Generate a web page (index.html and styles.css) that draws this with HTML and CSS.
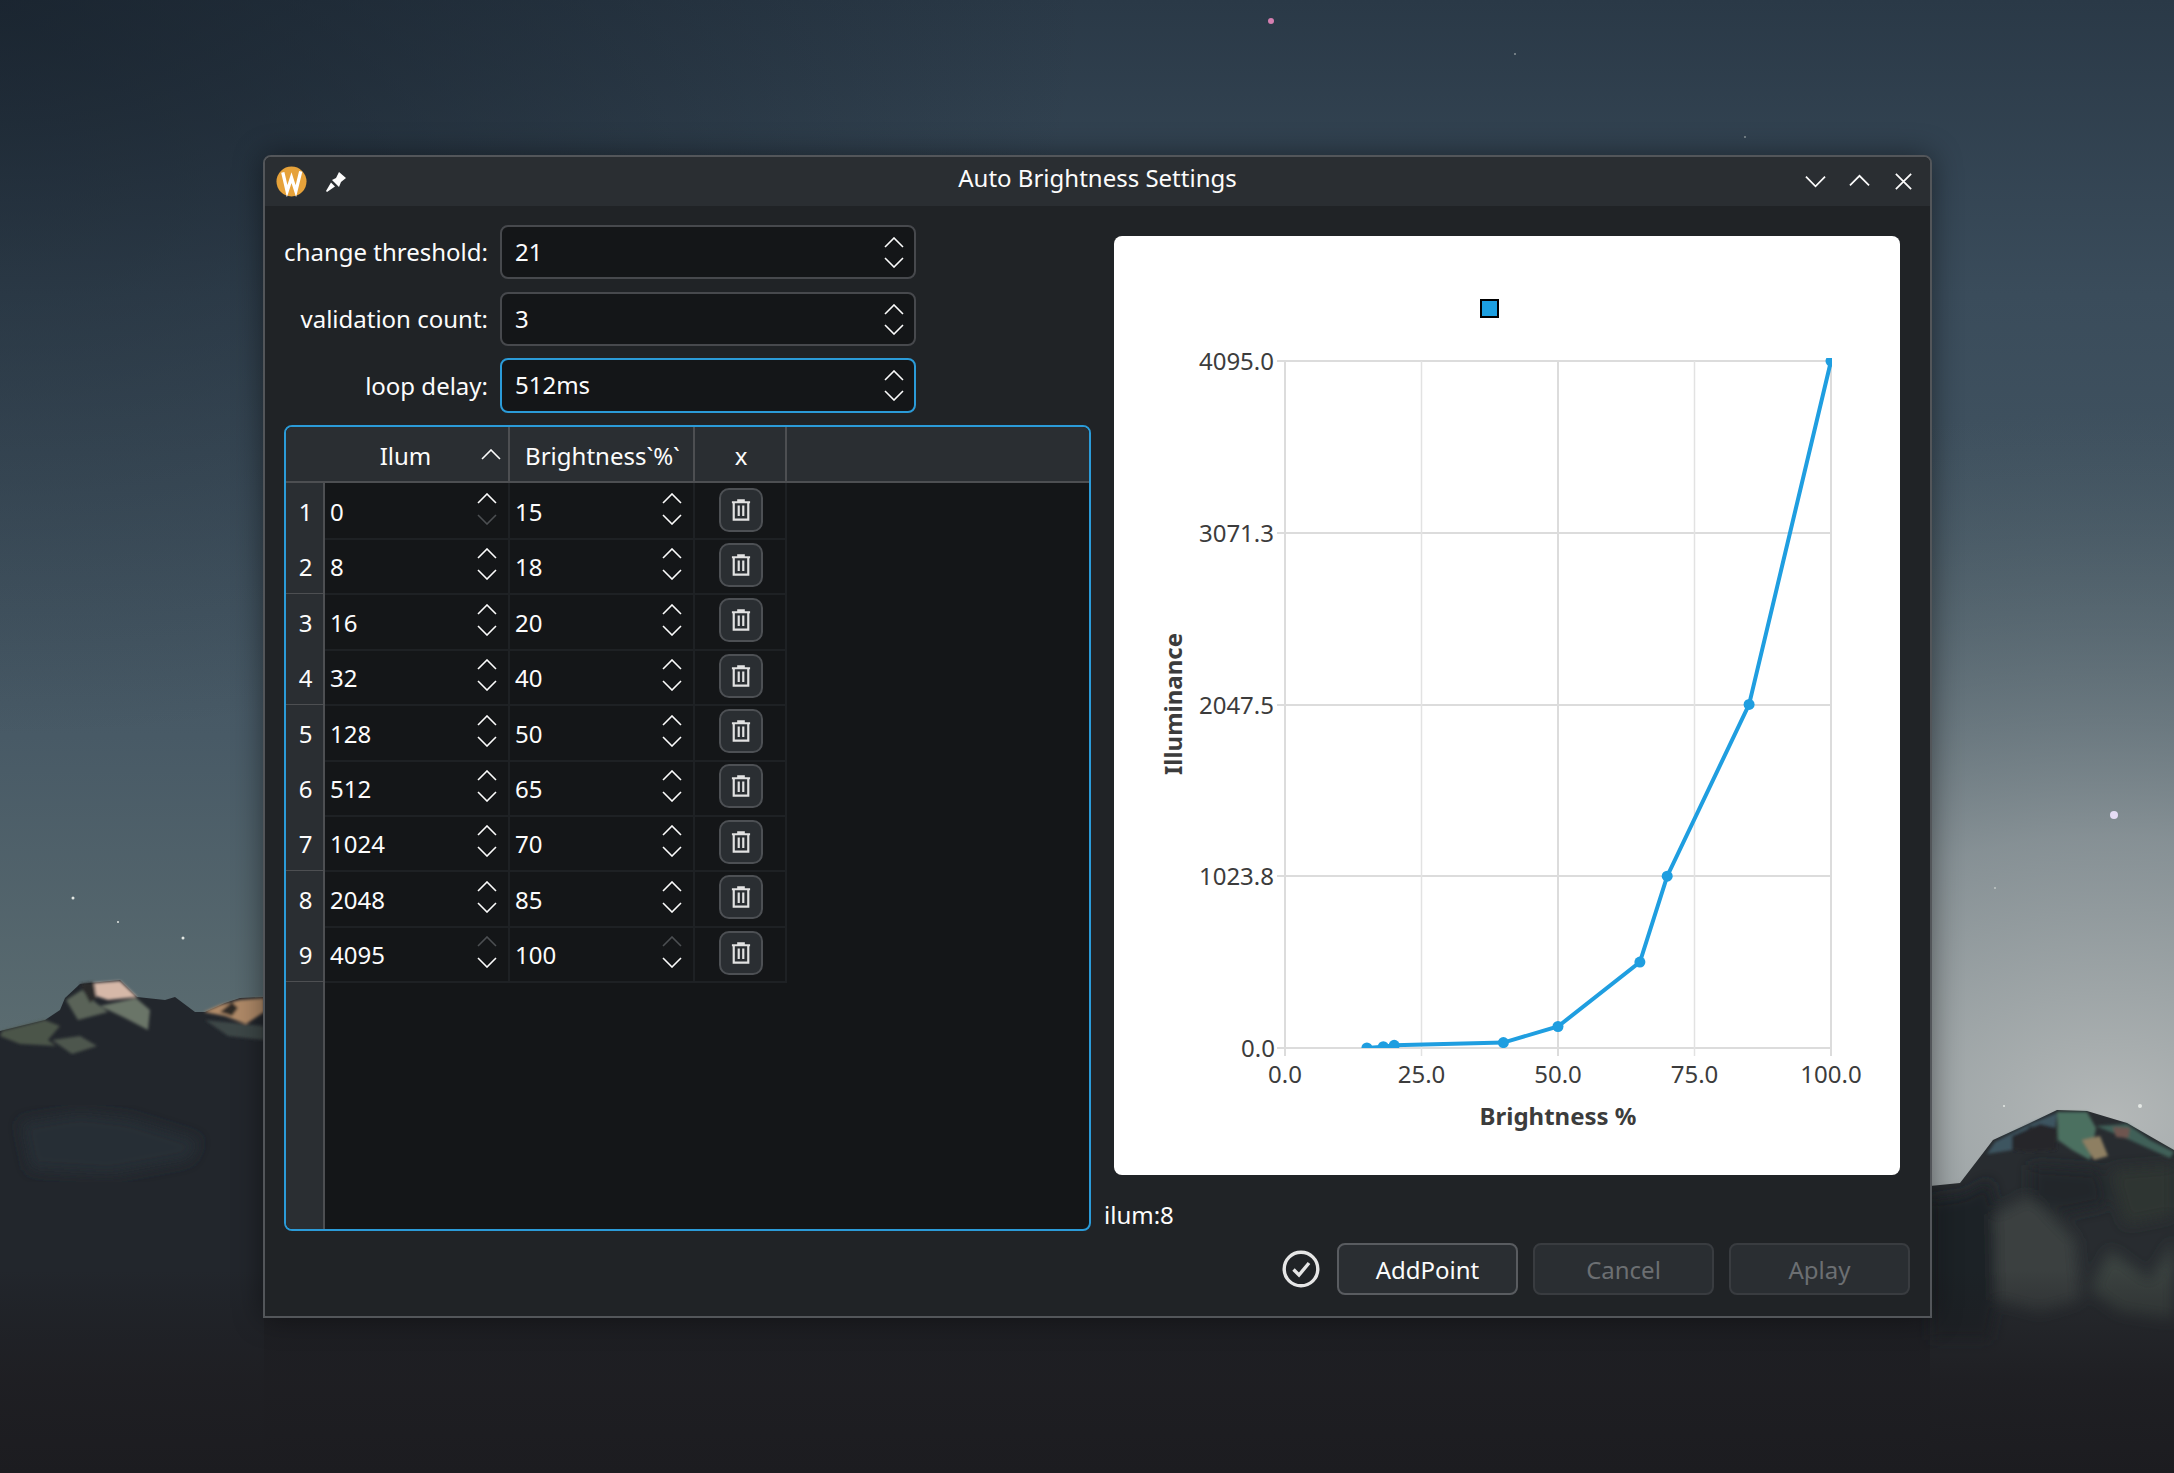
FILE: index.html
```html
<!DOCTYPE html>
<html lang="en">
<head>
  <meta charset="UTF-8" />
  <title>Auto Brightness Settings</title>
  <link rel="stylesheet" href="styles.css">
</head>
<body>

<!-- wallpaper -->
<svg class="wallpaper" viewBox="0 0 2174 1473" preserveAspectRatio="none">
  <defs>
    <linearGradient id="sky" x1="0" y1="0" x2="0" y2="1">
      <stop offset="0" stop-color="#2a3947"/>
      <stop offset="0.2" stop-color="#3a4c5b"/>
      <stop offset="0.5" stop-color="#485a66"/>
      <stop offset="0.72" stop-color="#5c6d71"/>
      <stop offset="1" stop-color="#5c6d71"/>
    </linearGradient>
    <radialGradient id="glow" cx="0.97" cy="0.76" r="0.48">
      <stop offset="0" stop-color="#b4b8b8" stop-opacity="1"/>
      <stop offset="0.4" stop-color="#98a0a3" stop-opacity="0.75"/>
      <stop offset="1" stop-color="#5c6d71" stop-opacity="0"/>
    </radialGradient>
    <radialGradient id="corner" cx="0" cy="0" r="0.5">
      <stop offset="0" stop-color="#141d27" stop-opacity="0.7"/>
      <stop offset="1" stop-color="#141d27" stop-opacity="0"/>
    </radialGradient>
    <linearGradient id="ground" x1="0" y1="0" x2="0" y2="1">
      <stop offset="0" stop-color="#1c1c20" stop-opacity="0"/>
      <stop offset="0.55" stop-color="#1e1e22" stop-opacity="0.9"/>
      <stop offset="1" stop-color="#1c1c20"/>
    </linearGradient>
    <filter id="soft"><feGaussianBlur stdDeviation="1.500"/></filter>
    <filter id="softer"><feGaussianBlur stdDeviation="7"/></filter>
  </defs>
  <rect width="2174" height="1473" fill="url(#sky)"/>
  <rect width="2174" height="1473" fill="url(#glow)"/>
  <rect width="2174" height="1473" fill="url(#corner)"/>

  <g fill="#e4e8e4">
    <circle cx="1271" cy="21" r="3" fill="#d57fb0"/>
    <circle cx="2114" cy="815" r="4" fill="#e6dcf5"/>
    <circle cx="73" cy="898" r="1.500"/>
    <circle cx="118" cy="922" r="1"/>
    <circle cx="183" cy="938" r="1.500"/>
    <circle cx="2140" cy="1106" r="2"/>
    <circle cx="2004" cy="1106" r="1"/>
    <circle cx="1515" cy="54" r="1" opacity="0.5"/>
    <circle cx="1745" cy="137" r="1" opacity="0.5"/>
    <circle cx="1995" cy="888" r="1" opacity="0.6"/>
  </g>

  <!-- ground between the two mountains, behind the window -->
  <rect x="240" y="1040" width="1691" height="433" fill="#1e2025"/>

  <!-- left mountain -->
  <polygon fill="#22262c" points="0,1031 45,1020 60,1010 65,998 80,984 120,980 137,997 165,1000 175,997 195,1012 205,1012 225,1003 240,998 264,997 264,1473 0,1473"/>
  <g filter="url(#soft)">
    <polygon fill="#4b5449" points="2,1031 45,1020 60,1026 48,1040 56,1046 20,1044 0,1036"/>
    <polygon fill="#4e574d" points="52,1040 80,1036 97,1046 72,1054"/>
    <polygon fill="#5a6458" points="66,1000 82,990 95,1002 108,1012 78,1020"/>
    <polygon fill="#6a7468" points="100,1006 136,998 150,1010 148,1030 125,1018"/>
    <polygon fill="#d6b8a8" points="94,983 120,981 137,997 108,1000 96,996"/>
    <polygon fill="#2a2a2c" points="80,984 93,982 96,998 90,1003"/>
    <polygon fill="#b08a68" points="204,1012 220,1005 240,1000 264,998 264,1012 246,1024 225,1016"/>
    <polygon fill="#2e2a28" points="220,1012 232,1002 238,1008 232,1016"/>
    <polygon fill="#3c4646" points="205,1020 264,1026 264,1040 228,1036"/>
  </g>
  <polygon fill="#282d35" filter="url(#softer)" points="20,1122 80,1112 130,1118 200,1140 190,1160 110,1175 30,1170"/>

  <!-- right mountain -->
  <polygon fill="#282c30" points="1930,1186 1960,1183 1980,1157 1993,1140 2030,1123 2057,1110 2087,1111 2127,1123 2174,1150 2174,1473 1930,1473"/>
  <g filter="url(#softer)">
    <polygon fill="#1f2328" points="1930,1200 1965,1195 1990,1180 2005,1260 1990,1340 1930,1340"/>
    <polygon fill="#3a413f" points="1994,1215 2030,1195 2050,1215 2075,1240 2080,1300 2040,1312 1996,1300"/>
    <polygon fill="#3a423f" points="2090,1290 2110,1250 2150,1280 2174,1240 2174,1320 2120,1312"/>
    <polygon fill="#23262c" points="2030,1165 2100,1170 2108,1205 2060,1215 2030,1200"/>
    <polygon fill="#2f3433" points="2110,1170 2174,1165 2174,1215 2125,1225"/>
  </g>
  <g filter="url(#soft)">
    <polygon fill="#3d5560" points="1987,1154 1995,1142 2030,1124 2057,1113 2055,1130 2030,1126 2012,1150"/>
    <polygon fill="#25262c" points="2012,1136 2040,1124 2057,1128 2056,1150 2028,1152 2012,1150"/>
    <polygon fill="#4c6f60" points="2057,1112 2087,1112 2096,1128 2090,1160 2072,1150 2058,1140"/>
    <polygon fill="#3f6158" points="2096,1126 2127,1124 2150,1140 2174,1152 2170,1158 2130,1140"/>
    <polygon fill="#8e7f62" points="2082,1140 2100,1136 2108,1156 2094,1160"/>
    <polygon fill="#6e5550" points="2113,1127 2130,1128 2128,1138 2116,1137"/>
  </g>

  <rect y="1270" width="2174" height="203" fill="url(#ground)"/>
</svg>

<svg class="defs-only" width="0" height="0">
  <symbol id="up" viewBox="0 0 20 11"><path d="M1 10 10 1l9 9" fill="none" stroke="currentColor" stroke-width="1.600"/></symbol>
  <symbol id="down" viewBox="0 0 20 11"><path d="M1 1l9 9 9-9" fill="none" stroke="currentColor" stroke-width="1.600"/></symbol>
  <symbol id="trash" viewBox="0 0 22 24">
    <path d="M1 3.500h20M8 3.500V1.500h6v2M3 3.500v19h16v-19M8.500 7v11.500M13.500 7v11.500" fill="none" stroke="currentColor" stroke-width="2.400"/>
  </symbol>
</svg>

<div class="window">
  <div class="titlebar">
    <svg class="logo" viewBox="0 0 32 32">
      <circle cx="16" cy="16" r="15.500" fill="#e6a23a"/>
      <path d="M7 6.500 11.500 26 16 12 20.500 26 25.500 5.500" fill="none" stroke="#fff" stroke-width="3.400"/>
    </svg>
    <svg class="pin" viewBox="0 0 22 22">
      <path d="M14 1l7 6-5 4-2 5-7-7 4-2zM6 11.500l4 4-8 5.500-1-1z" fill="#fcfcfc"/>
    </svg>
    <div class="title">Auto Brightness Settings</div>
    <div class="win-btns">
      <svg class="win-btn" viewBox="0 0 22 22"><path d="M1 6l10 10L21 6" fill="none" stroke="#fcfcfc" stroke-width="1.800"/></svg>
      <svg class="win-btn" viewBox="0 0 22 22"><path d="M1 15 11 5l10 10" fill="none" stroke="#fcfcfc" stroke-width="1.800"/></svg>
      <svg class="win-btn" viewBox="0 0 22 22"><path d="M3 3l16 16M19 3 3 19" fill="none" stroke="#fcfcfc" stroke-width="1.800"/></svg>
    </div>
  </div>

  <div class="body">
    <div class="content">
      <div class="left">
        <div class="form">
          <label>change threshold:</label>
          <div class="spin">21<span class="arrows"><svg><use href="#up"/></svg><svg><use href="#down"/></svg></span></div>
          <label>validation count:</label>
          <div class="spin">3<span class="arrows"><svg><use href="#up"/></svg><svg><use href="#down"/></svg></span></div>
          <label>loop delay:</label>
          <div class="spin focus">512ms<span class="arrows"><svg><use href="#up"/></svg><svg><use href="#down"/></svg></span></div>
        </div>

        <div class="table">
          <div class="thead">
            <div class="th corner"></div>
            <div class="th th-sort">Ilum<svg class="sort"><use href="#up"/></svg></div>
            <div class="th th-wide">Brightness`%`</div>
            <div class="th th-wide">x</div>
            <div class="th rest"></div>
          </div>

          <div class="row">
            <div class="num">1</div>
            <div class="cell">0<span class="arrows"><svg><use href="#up"/></svg><svg class="off"><use href="#down"/></svg></span></div>
            <div class="cell">15<span class="arrows"><svg><use href="#up"/></svg><svg><use href="#down"/></svg></span></div>
            <div class="cell del"><span class="trash"><svg><use href="#trash"/></svg></span></div>
          </div>
          <div class="row">
            <div class="num">2</div>
            <div class="cell">8<span class="arrows"><svg><use href="#up"/></svg><svg><use href="#down"/></svg></span></div>
            <div class="cell">18<span class="arrows"><svg><use href="#up"/></svg><svg><use href="#down"/></svg></span></div>
            <div class="cell del"><span class="trash"><svg><use href="#trash"/></svg></span></div>
          </div>
          <div class="row">
            <div class="num">3</div>
            <div class="cell">16<span class="arrows"><svg><use href="#up"/></svg><svg><use href="#down"/></svg></span></div>
            <div class="cell">20<span class="arrows"><svg><use href="#up"/></svg><svg><use href="#down"/></svg></span></div>
            <div class="cell del"><span class="trash"><svg><use href="#trash"/></svg></span></div>
          </div>
          <div class="row">
            <div class="num">4</div>
            <div class="cell">32<span class="arrows"><svg><use href="#up"/></svg><svg><use href="#down"/></svg></span></div>
            <div class="cell">40<span class="arrows"><svg><use href="#up"/></svg><svg><use href="#down"/></svg></span></div>
            <div class="cell del"><span class="trash"><svg><use href="#trash"/></svg></span></div>
          </div>
          <div class="row">
            <div class="num">5</div>
            <div class="cell">128<span class="arrows"><svg><use href="#up"/></svg><svg><use href="#down"/></svg></span></div>
            <div class="cell">50<span class="arrows"><svg><use href="#up"/></svg><svg><use href="#down"/></svg></span></div>
            <div class="cell del"><span class="trash"><svg><use href="#trash"/></svg></span></div>
          </div>
          <div class="row">
            <div class="num">6</div>
            <div class="cell">512<span class="arrows"><svg><use href="#up"/></svg><svg><use href="#down"/></svg></span></div>
            <div class="cell">65<span class="arrows"><svg><use href="#up"/></svg><svg><use href="#down"/></svg></span></div>
            <div class="cell del"><span class="trash"><svg><use href="#trash"/></svg></span></div>
          </div>
          <div class="row">
            <div class="num">7</div>
            <div class="cell">1024<span class="arrows"><svg><use href="#up"/></svg><svg><use href="#down"/></svg></span></div>
            <div class="cell">70<span class="arrows"><svg><use href="#up"/></svg><svg><use href="#down"/></svg></span></div>
            <div class="cell del"><span class="trash"><svg><use href="#trash"/></svg></span></div>
          </div>
          <div class="row">
            <div class="num">8</div>
            <div class="cell">2048<span class="arrows"><svg><use href="#up"/></svg><svg><use href="#down"/></svg></span></div>
            <div class="cell">85<span class="arrows"><svg><use href="#up"/></svg><svg><use href="#down"/></svg></span></div>
            <div class="cell del"><span class="trash"><svg><use href="#trash"/></svg></span></div>
          </div>
          <div class="row">
            <div class="num">9</div>
            <div class="cell">4095<span class="arrows"><svg class="off"><use href="#up"/></svg><svg><use href="#down"/></svg></span></div>
            <div class="cell">100<span class="arrows"><svg class="off"><use href="#up"/></svg><svg><use href="#down"/></svg></span></div>
            <div class="cell del"><span class="trash"><svg><use href="#trash"/></svg></span></div>
          </div>

          <div class="filler"><div class="filler-head"></div></div>
        </div>
      </div>

      <div class="right">
        <div class="chart">
          <svg class="plot" viewBox="1114 236 786 939">
            <defs><clipPath id="area"><rect x="1285" y="358" width="547" height="690"/></clipPath></defs>
            <rect class="legend" x="1481" y="300" width="17" height="17"/>

            <path class="grid-major" d="M1277 361H1831M1277 533H1831M1277 705H1831M1277 876H1831M1277 1048H1831"/>
            <path class="grid-major" d="M1285 361V1056M1558 361V1056M1831 361V1056"/>
            <path class="grid-minor" d="M1421.500 361V1056M1694.500 361V1056"/>

            <g clip-path="url(#area)">
              <polyline class="curve" points="1366.900,1048 1383.300,1046.700 1394.200,1045.300 1503.400,1042.600 1558,1026.500 1639.900,962.100 1667.200,876.200 1749.100,704.400 1831,361"/>
              <g class="dots">
                <circle cx="1366.900" cy="1048" r="5.500"/>
                <circle cx="1383.300" cy="1046.700" r="5.500"/>
                <circle cx="1394.200" cy="1045.300" r="5.500"/>
                <circle cx="1503.400" cy="1042.600" r="5.500"/>
                <circle cx="1558" cy="1026.500" r="5.500"/>
                <circle cx="1639.900" cy="962.100" r="5.500"/>
                <circle cx="1667.200" cy="876.200" r="5.500"/>
                <circle cx="1749.100" cy="704.400" r="5.500"/>
                <circle cx="1831" cy="361" r="5.500"/>
              </g>
            </g>

            <g class="ylabels">
              <text x="1274" y="370">4095.0</text>
              <text x="1274" y="542">3071.3</text>
              <text x="1274" y="714">2047.5</text>
              <text x="1274" y="885">1023.8</text>
              <text x="1275" y="1057">0.0</text>
            </g>
            <g class="xlabels">
              <text x="1285" y="1083">0.0</text>
              <text x="1421.500" y="1083">25.0</text>
              <text x="1558" y="1083">50.0</text>
              <text x="1694.500" y="1083">75.0</text>
              <text x="1831" y="1083">100.0</text>
            </g>
            <text class="axis-title" x="1558" y="1125">Brightness %</text>
            <text class="axis-title" transform="translate(1182 704) rotate(-90)">Illuminance</text>
          </svg>
        </div>
        <div class="ilum">ilum:8</div>
      </div>
    </div>

    <div class="footer">
      <svg class="ok" viewBox="0 0 38 38">
        <circle cx="19" cy="19" r="16.800" fill="none" stroke="#e6e6e6" stroke-width="3.400"/>
        <path d="M11.500 19.500 17 25 27 13" fill="none" stroke="#e6e6e6" stroke-width="3.400"/>
      </svg>
      <button class="btn">AddPoint</button>
      <button class="btn" disabled>Cancel</button>
      <button class="btn" disabled>Aplay</button>
    </div>
  </div>
</div>

</body>
</html>
```

FILE: styles.css
```css
html, body {
  margin: 0;
  height: 100%;
  overflow: hidden;
}
body {
  width: 2174px;
  height: 1473px;
  position: relative;
  background: #1c1c20;
  font-family: "Noto Sans", sans-serif;
  font-size: 24px;
  color: #fcfcfc;
}
.wallpaper {
  position: absolute;
  left: 0;
  top: 0;
  width: 2174px;
  height: 1473px;
}
.defs-only {
  position: absolute;
}

/* window */
.window {
  position: absolute;
  left: 263px;
  top: 155px;
  width: 1669px;
  height: 1163px;
  box-sizing: border-box;
  border: 2px solid #53565a;
  border-radius: 8px 8px 0 0;
  background: #202326;
  box-shadow: 0 0 30px rgba(0,0,0,0.45);
  display: flex;
  flex-direction: column;
}
.titlebar {
  height: 49px;
  flex: none;
  background: #2a2e32;
  border-radius: 6px 6px 0 0;
  display: flex;
  align-items: center;
  position: relative;
}
.logo {
  width: 31px;
  height: 31px;
  margin-left: 11px;
}
.pin {
  width: 22px;
  height: 22px;
  margin-left: 18px;
}
.title {
  position: absolute;
  left: 0;
  right: 0;
  top: 4px;
  text-align: center;
}
.win-btns {
  margin-left: auto;
  margin-right: 16px;
  display: flex;
  gap: 23px;
  position: relative;
}
.win-btn {
  width: 21px;
  height: 21px;
}

.body {
  flex: 1;
  display: flex;
  flex-direction: column;
  padding: 19px 20px 0 19px;
}
.content {
  display: flex;
  height: 1006px;
}
.left {
  width: 807px;
  display: flex;
  flex-direction: column;
}

/* top form */
.form {
  display: grid;
  grid-template-columns: 204px 416px;
  column-gap: 12px;
  grid-auto-rows: 54px;
  row-gap: 13px;
}
.form label {
  text-align: right;
  line-height: 54px;
  white-space: nowrap;
}
.spin {
  box-sizing: border-box;
  position: relative;
  background: #141618;
  border: 2px solid #47494d;
  border-radius: 8px;
  line-height: 50px;
  padding-left: 13px;
}
.spin.focus {
  border-color: #2b9bd8;
  margin-top: -1px;
}
.spin .arrows {
  right: 10px;
  top: 10px;
  gap: 9px;
}
.arrows {
  position: absolute;
  display: flex;
  flex-direction: column;
}
.arrows svg {
  width: 20px;
  height: 11px;
  color: #fcfcfc;
}
.arrows svg.off {
  color: #4c4f52;
}

/* table */
.table {
  margin-top: 12px;
  flex: 1;
  display: flex;
  flex-direction: column;
  box-sizing: border-box;
  border: 2px solid #2b9bd8;
  border-radius: 8px;
  background: #141618;
  overflow: hidden;
}
.thead,
.row {
  display: grid;
  grid-template-columns: 39px 185px 185px 92px;
  flex: none;
}
.thead {
  grid-template-columns: 39px 185px 185px 92px 1fr;
  height: 56px;
  background: #2a2e32;
  border-bottom: 2px solid #4d4f52;
  box-sizing: border-box;
}
.th {
  border-right: 2px solid #4d4f52;
  display: flex;
  align-items: center;
  justify-content: center;
  padding-top: 3px;
  box-sizing: border-box;
  position: relative;
}
.th.corner,
.th.rest {
  border-right: none;
}
.th-sort {
  padding-right: 22px;
}
.th-wide {
  padding-left: 2px;
}
.sort {
  position: absolute;
  right: 7px;
  top: 22px;
  width: 20px;
  height: 11px;
}
.row {
  height: 55.400px;
}
.num {
  background: #2a2e32;
  border-right: 2px solid #4d4f52;
  border-bottom: 2px solid #4d4f52;
  display: flex;
  align-items: center;
  justify-content: center;
  padding: 2px 0 0 2px;
}
.cell {
  position: relative;
  border-right: 2px solid #1e2124;
  border-bottom: 2px solid #1e2124;
  line-height: 53px;
  padding-left: 5px;
  padding-top: 2px;
}
.cell .arrows {
  right: 11px;
  top: 10px;
  gap: 10px;
}
.del {
  display: flex;
  align-items: center;
  justify-content: center;
  padding: 0 0 2px 2px;
}
.trash {
  box-sizing: border-box;
  width: 44px;
  height: 44px;
  background: #2a2e32;
  border: 2px solid #4d5054;
  border-radius: 10px;
  display: flex;
  align-items: center;
  justify-content: center;
  color: #e2e2e2;
}
.trash svg {
  width: 20px;
  height: 24px;
}
.filler {
  flex: 1;
  display: flex;
}
.filler-head {
  width: 37px;
  background: #2a2e32;
  border-right: 2px solid #4d4f52;
}

/* chart side */
.right {
  flex: 1;
  display: flex;
  flex-direction: column;
  padding-top: 11px;
  margin-left: 13px;
}
.chart {
  margin-left: 10px;
  width: 786px;
  height: 939px;
  background: #fff;
  border-radius: 8px;
  flex: none;
}
.plot {
  display: block;
  width: 786px;
  height: 939px;
}
.legend {
  fill: #1c9fe0;
  stroke: #000;
  stroke-width: 2;
}
.grid-major {
  fill: none;
  stroke: #dcdcdc;
  stroke-width: 2;
}
.grid-minor {
  fill: none;
  stroke: #e2e2e2;
  stroke-width: 1.5;
}
.curve {
  fill: none;
  stroke: #1f9ee0;
  stroke-width: 4;
}
.dots {
  fill: #1f9ee0;
}
.ylabels text,
.xlabels text {
  font-size: 24px;
  fill: #3c3c3c;
}
.ylabels text {
  text-anchor: end;
}
.xlabels text {
  text-anchor: middle;
}
.axis-title {
  font-size: 24px;
  font-weight: 700;
  fill: #3c3c3c;
  text-anchor: middle;
}
.ilum {
  margin-top: 23px;
  line-height: 33px;
}

/* buttons */
.footer {
  display: flex;
  justify-content: flex-end;
  align-items: center;
  gap: 15px;
  margin-top: 12px;
}
.ok {
  width: 38px;
  height: 38px;
  margin-right: 2px;
}
.btn {
  width: 181px;
  height: 52px;
  background: #2a2e32;
  border: 2px solid #595c60;
  border-radius: 8px;
  color: #fcfcfc;
  font: inherit;
  padding: 0;
}
.btn:disabled {
  border-color: #393c40;
  color: #6c6f72;
}
```
